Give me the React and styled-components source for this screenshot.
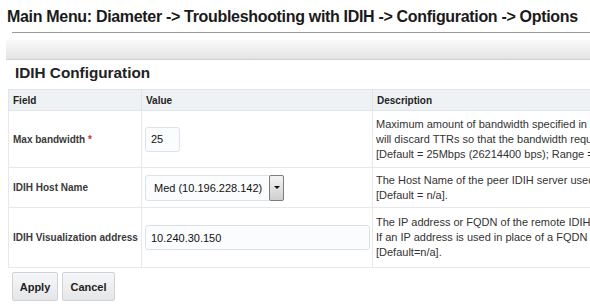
import React from "react";
import styled, { createGlobalStyle } from "styled-components";

const Global = createGlobalStyle`
  html, body { margin: 0; padding: 0; background: #fff; overflow: hidden; }
  body { font-family: "Liberation Sans", Arial, sans-serif; color: #333; }
`;

const Page = styled.div`
  width: 590px;
  height: 308px;
  overflow: hidden;
  position: relative;
`;

const Title = styled.h1`
  margin: 0;
  padding: 7px 0 0 7px;
  font-size: 16px;
  letter-spacing: -0.32px;
  line-height: 19px;
  font-weight: bold;
  color: #1a1a1a;
  white-space: nowrap;
`;

const Rule = styled.div`
  margin: 6px 0 0 12px;
  height: 1px;
  background: #9a9a9a;
`;

const Band = styled.div`
  margin: 7px 0 0 6px;
  height: 19px;
  background: linear-gradient(#fafafa, #e3e3e3);
  border-bottom: 1px solid #d2d2d2;
`;

const Heading = styled.h2`
  margin: 0;
  padding: 4px 0 0 15px;
  font-size: 15.3px;
  line-height: 18px;
  font-weight: bold;
  color: #222;
  white-space: nowrap;
`;

const Table = styled.table`
  margin: 7px 0 0 8px;
  border-collapse: collapse;
  table-layout: fixed;
  width: 800px;
`;

const HeadCell = styled.th`
  height: 20px;
  padding: 0 4px;
  text-align: left;
  font-size: 10px;
  font-weight: bold;
  color: #222;
  background: #eff2f5;
  border: 1px solid #e1e4e8;
  vertical-align: middle;
`;

const Row = styled.tr`
  height: ${(p) => p.$h}px;
`;

const LabelCell = styled.td`
  padding: 0 4px;
  font-size: 10px;
  font-weight: bold;
  color: #3a3a3a;
  border: 1px solid #e6e8eb;
  vertical-align: middle;
  white-space: nowrap;
`;

const ValueCell = styled.td`
  padding: 0 3px;
  border: 1px solid #e6e8eb;
  vertical-align: middle;
`;

const DescCell = styled.td`
  padding: 0 3px;
  font-size: 11px;
  line-height: 15px;
  color: #333;
  border: 1px solid #e6e8eb;
  vertical-align: middle;
`;

const Line = styled.span`
  display: block;
  white-space: nowrap;
`;

const Req = styled.span`
  color: #d0302a;
`;

const TextInput = styled.input`
  box-sizing: border-box;
  width: ${(p) => p.$w}px;
  height: 25px;
  padding: 0 5px;
  border: 1px solid #dde2e8;
  border-radius: 3px;
  background: #fbfcfd;
  font-family: "Liberation Sans", Arial, sans-serif;
  font-size: 11px;
  color: #111;
  outline: none;
`;

const Select = styled.div`
  box-sizing: border-box;
  width: 139px;
  height: 26px;
  display: flex;
  align-items: stretch;
  border: 1px solid #dde2e8;
  border-radius: 3px 0 0 3px;
  background: #fbfcfd;
`;

const SelectText = styled.div`
  flex: 1;
  display: flex;
  align-items: center;
  padding-left: 8px;
  font-size: 11px;
  color: #111;
  white-space: nowrap;
`;

const Arrow = styled.div`
  width: 13px;
  margin: -1px -1px -1px 0;
  border: 1px solid #7d7d7d;
  border-radius: 2px;
  background: linear-gradient(#f4f4f4, #cfcfcf);
  display: flex;
  align-items: center;
  justify-content: center;
  &::after {
    content: "";
    border-left: 3px solid transparent;
    border-right: 3px solid transparent;
    border-top: 3px solid #111;
  }
`;

const Buttons = styled.div`
  display: flex;
  gap: 4px;
  margin: 4px 0 0 12px;
`;

const Button = styled.button`
  box-sizing: border-box;
  width: ${(p) => p.$w}px;
  height: 29px;
  padding: 0;
  border: 1px solid #cfd3d7;
  border-radius: 2px;
  background: linear-gradient(#f6f7f8, #e4e6e8);
  font-family: "Liberation Sans", Arial, sans-serif;
  font-size: 11px;
  font-weight: bold;
  color: #1e1e1e;
`;

export default function App() {
  return (
    <Page>
      <Global />
      <Title>Main Menu: Diameter -&gt; Troubleshooting with IDIH -&gt; Configuration -&gt; Options</Title>
      <Rule />
      <Band />
      <Heading>IDIH Configuration</Heading>
      <Table>
        <colgroup>
          <col style={{ width: 133 }} />
          <col style={{ width: 231 }} />
          <col />
        </colgroup>
        <thead>
          <tr>
            <HeadCell>Field</HeadCell>
            <HeadCell>Value</HeadCell>
            <HeadCell>Description</HeadCell>
          </tr>
        </thead>
        <tbody>
          <Row $h={57}>
            <LabelCell>
              Max bandwidth <Req>*</Req>
            </LabelCell>
            <ValueCell>
              <TextInput $w={35} defaultValue="25" />
            </ValueCell>
            <DescCell>
              <Line>Maximum amount of bandwidth specified in Mbps that the DA-MP will use for sending TTRs. The DA-MP</Line>
              <Line>will discard TTRs so that the bandwidth required to send them does not exceed this value.</Line>
              <Line>[Default = 25Mbps (26214400 bps); Range = 1Mbps to 100Mbps]</Line>
            </DescCell>
          </Row>
          <Row $h={40}>
            <LabelCell>IDIH Host Name</LabelCell>
            <ValueCell>
              <Select>
                <SelectText>Med (10.196.228.142)</SelectText>
                <Arrow />
              </Select>
            </ValueCell>
            <DescCell>
              <Line>The Host Name of the peer IDIH server used by the DA-MPs for sending TTRs.</Line>
              <Line>[Default = n/a].</Line>
            </DescCell>
          </Row>
          <Row $h={60}>
            <LabelCell>IDIH Visualization address</LabelCell>
            <ValueCell>
              <TextInput $w={225} defaultValue="10.240.30.150" />
            </ValueCell>
            <DescCell>
              <Line>The IP address or FQDN of the remote IDIH server used for displaying the IDIH GUI.</Line>
              <Line>If an IP address is used in place of a FQDN then the address must be reachable.</Line>
              <Line>[Default=n/a].</Line>
            </DescCell>
          </Row>
        </tbody>
      </Table>
      <Buttons>
        <Button $w={46}>Apply</Button>
        <Button $w={53}>Cancel</Button>
      </Buttons>
    </Page>
  );
}
